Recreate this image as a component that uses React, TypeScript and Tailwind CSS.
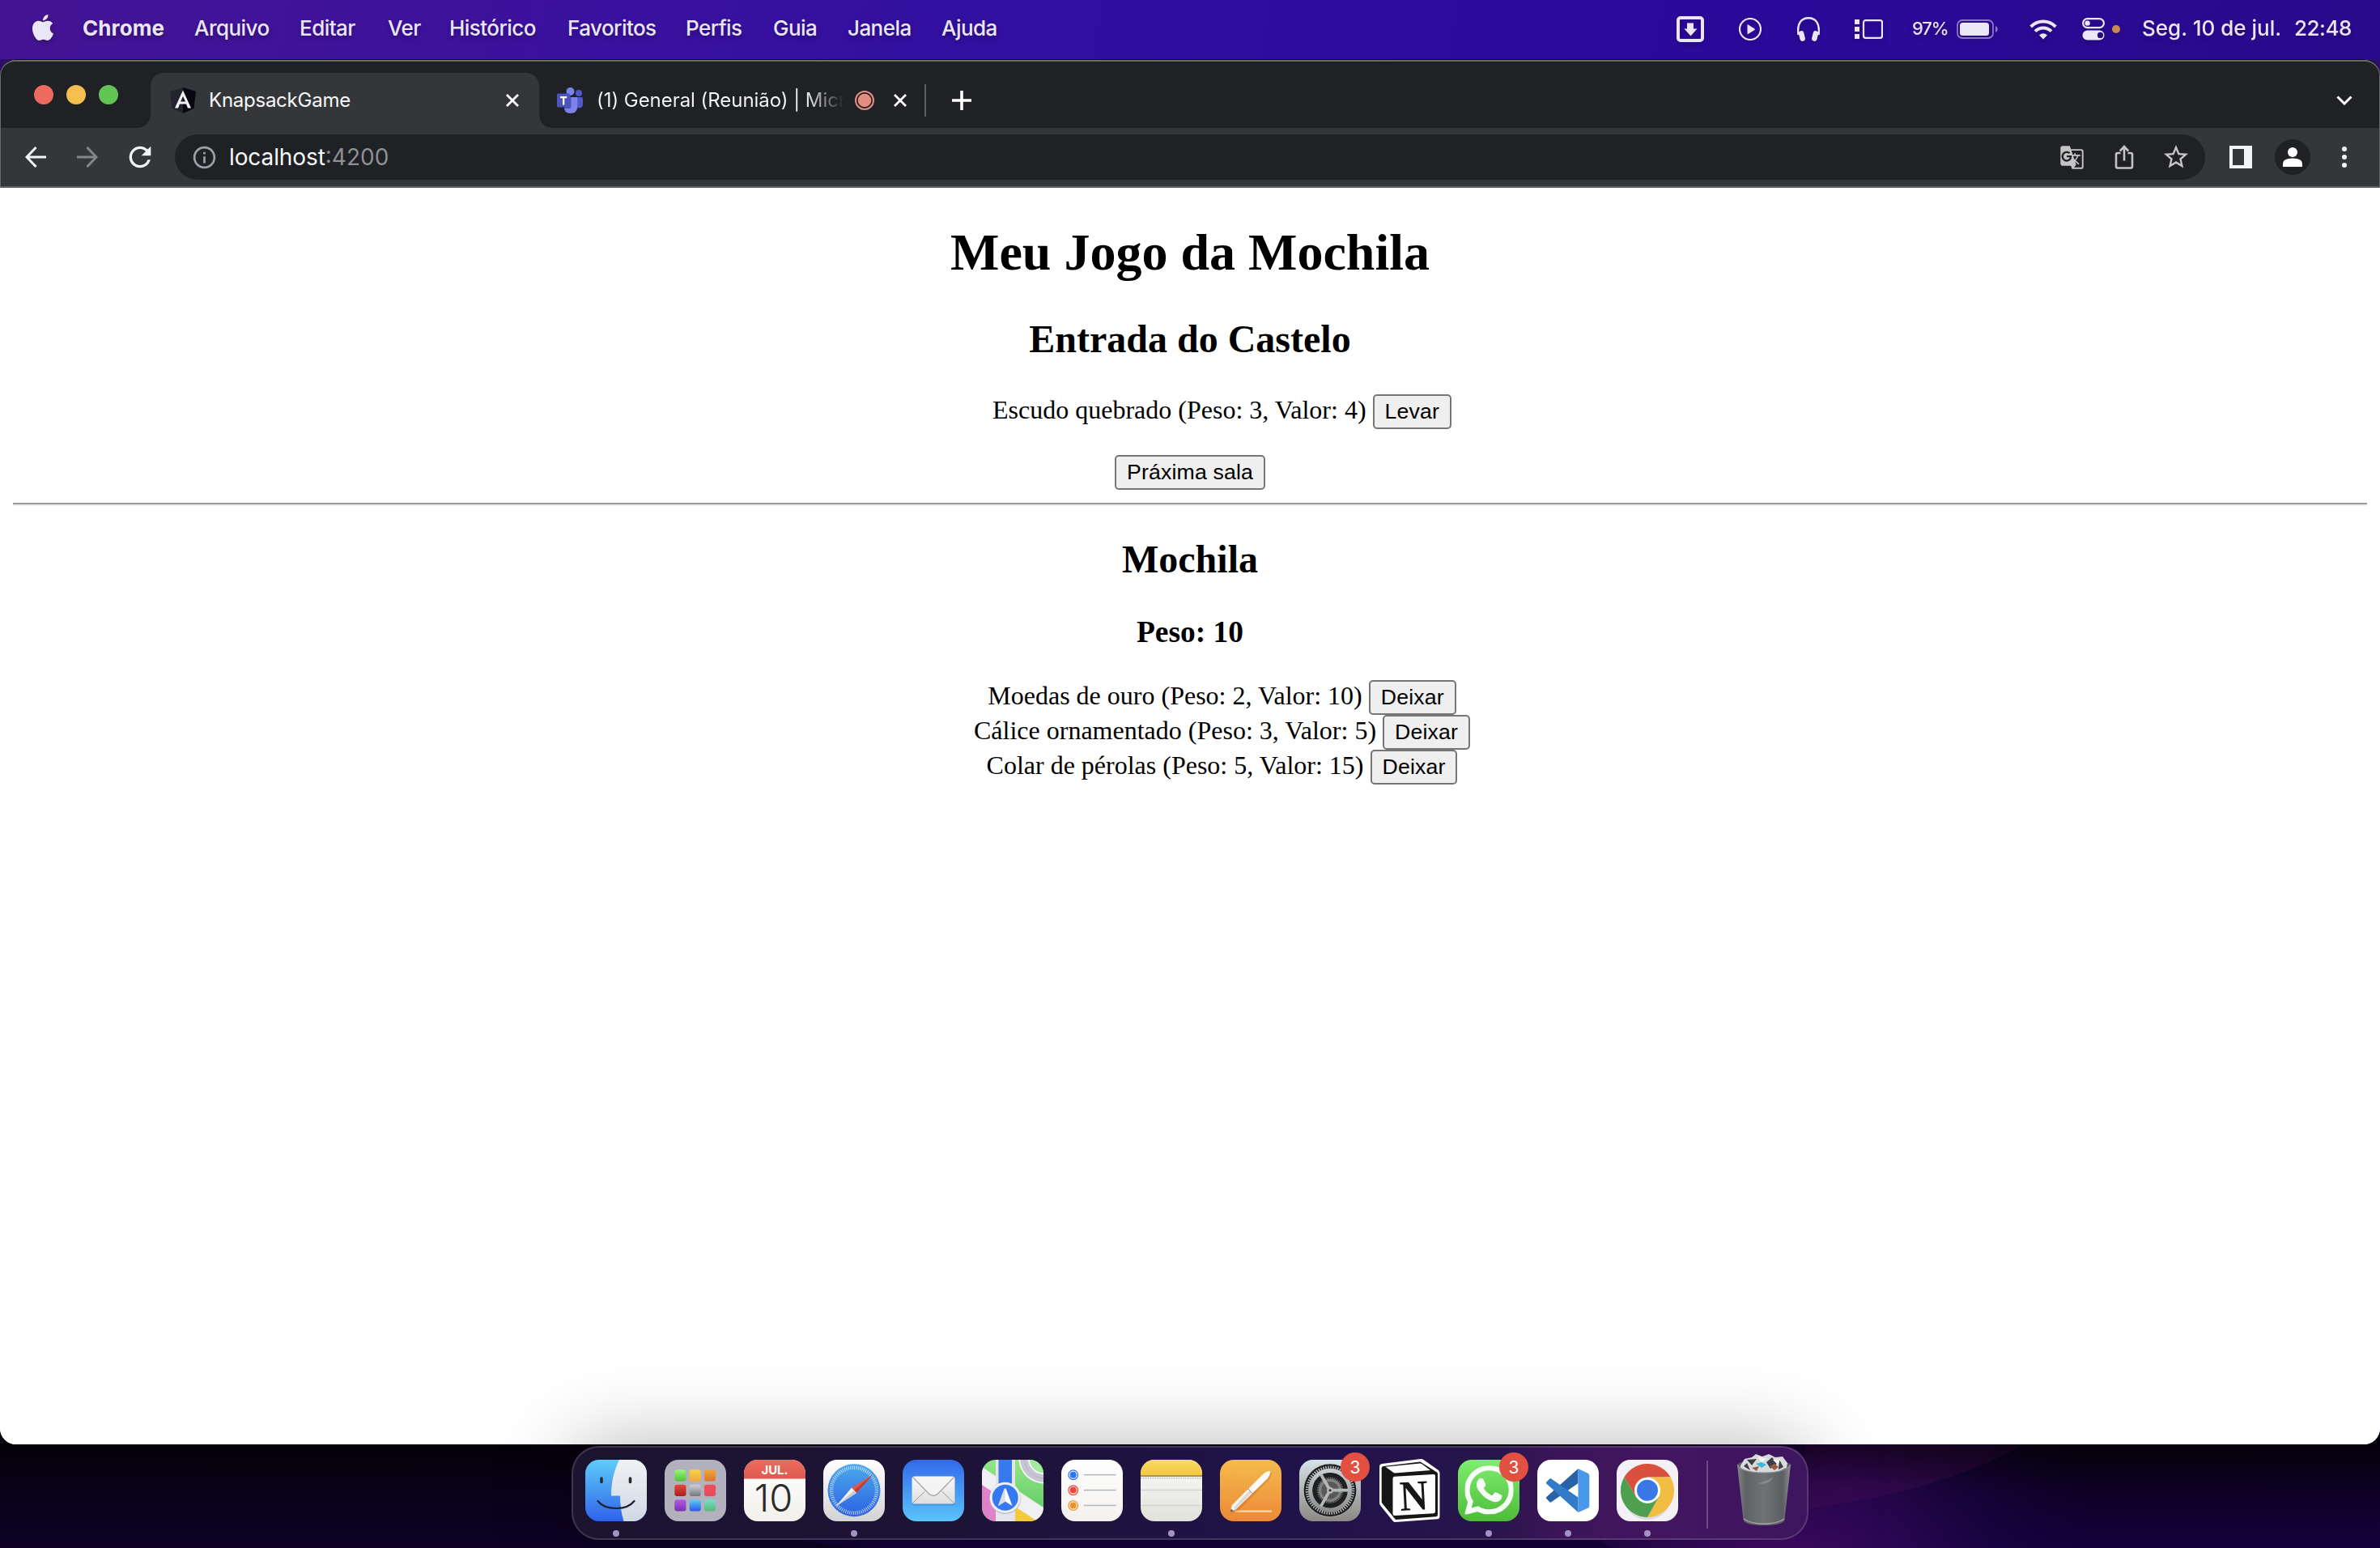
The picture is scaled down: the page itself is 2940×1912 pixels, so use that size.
import React from "react";
import type { ReactNode } from "react";
import { SiApple, SiWhatsapp } from "react-icons/si";
import { MdRefresh, MdInfoOutline, MdGTranslate, MdStarBorder } from "react-icons/md";

const menus = [
  { label: "Arquivo", width: "w-[130px]" },
  { label: "Editar", width: "w-[109px]" },
  { label: "Ver", width: "w-[76px]" },
  { label: "Histórico", width: "w-[146px]" },
  { label: "Favoritos", width: "w-[146px]" },
  { label: "Perfis", width: "w-[108px]" },
  { label: "Guia", width: "w-[92px]" },
  { label: "Janela", width: "w-[116px]" },
  { label: "Ajuda", width: "w-[80px]" },
];

const items = [
  { name: "Moedas de ouro", peso: 2, valor: 10 },
  { name: "Cálice ornamentado", peso: 3, valor: 5 },
  { name: "Colar de pérolas", peso: 5, valor: 15 },
];

function MenuBar() {
  return (
    <header className="flex h-[73px] shrink-0 items-start bg-[linear-gradient(100deg,#451494_0%,#3a119e_25%,#310f9f_42%,#2b0a9c_68%,#290a8c_100%)] text-[26px] font-medium text-[#ebe6f5]">
      <div className="flex h-[68px] w-[102px] items-center pl-[37px]">
        <SiApple className="size-[32px] drop-shadow-[0_2px_3px_rgba(0,0,0,0.3)]" />
      </div>
      <nav className="flex h-[68px] items-center whitespace-nowrap tracking-[-0.55px] [text-shadow:0_3px_5px_rgba(0,0,0,0.28)]">
        <span className="w-[138px] font-bold tracking-[0.1px]">Chrome</span>
        {menus.map((m) => (
          <span key={m.label} className={m.width}>
            {m.label}
          </span>
        ))}
      </nav>
      <div className="ml-auto flex h-[72px] items-center drop-shadow-[0_3px_3px_rgba(0,0,0,0.2)]">
        <svg className="mr-[43px] h-[32px] w-[34px]" viewBox="0 0 34 32" fill="none">
          <rect x="2" y="2" width="30" height="28" rx="3" stroke="currentColor" strokeWidth="4" />
          <path d="M13 8.500h8v7h4.500L17.500 24.500 9.500 15.500H13z" fill="currentColor" />
        </svg>
        <svg className="mr-[44px] size-[28px]" viewBox="0 0 28 28" fill="none">
          <circle cx="14" cy="14" r="13" stroke="currentColor" strokeWidth="2.200" />
          <path d="M10.500 9v10.500q0 1 1 .5l8-5q.8-.8 0-1.500l-8-5q-1-.5-1 .5z" fill="currentColor" />
        </svg>
        <svg className="mr-[43px] h-[30px] w-[28px]" viewBox="0 0 28 30" fill="none">
          <path d="M1.500 22C-.5 8 5 1.300 14 1.300S28.500 8 26.500 22" stroke="currentColor" strokeWidth="2.400" />
          <rect x="2.500" y="17" width="6.500" height="13" rx="3.200" transform="rotate(-14 5.700 23)" fill="currentColor" />
          <rect x="19" y="17" width="6.500" height="13" rx="3.200" transform="rotate(14 22.300 23)" fill="currentColor" />
        </svg>
        <svg className="mr-[36px] h-[24px] w-[35px]" viewBox="0 0 35 24" fill="none">
          <path d="M0 0h6v6H0zM0 9h6v6H0zM0 18h6v6H0z" fill="currentColor" />
          <rect x="11" y="1.200" width="23" height="21.600" rx="2.500" stroke="currentColor" strokeWidth="2.200" />
        </svg>
        <span className="mr-[9px] w-[46px] pb-px text-[22px] tracking-[-1.1px]">97%</span>
        <svg className="mr-[38px] h-[24px] w-[52px]" viewBox="0 0 52 24" fill="none">
          <rect x="1" y="1" width="44" height="22" rx="6" stroke="currentColor" strokeOpacity="0.5" strokeWidth="1.800" />
          <rect x="4" y="4" width="36" height="16" rx="3.500" fill="currentColor" />
          <path d="M48 8c3.600 1.500 3.600 6.500 0 8z" fill="currentColor" fillOpacity="0.5" />
        </svg>
        <svg className="mr-[31px] h-[26px] w-[34px]" viewBox="0 0 34 26" fill="none" stroke="currentColor" strokeWidth="4">
          <path d="M1.700 10a21.500 21.500 0 0 1 30.600 0" />
          <path d="M7 15.600a14 14 0 0 1 20 0" />
          <path d="M17 25.500l-5-5q5-4.400 10 0z" fill="currentColor" stroke="none" />
        </svg>
        <svg className="mr-[9px] h-[28px] w-[28px]" viewBox="0 0 28 28" fill="none">
          <rect x="1.100" y="1.100" width="25.800" height="11" rx="5.500" stroke="currentColor" strokeWidth="2.200" />
          <circle cx="6.600" cy="6.600" r="3.200" fill="currentColor" />
          <path fillRule="evenodd" d="M6.500 15.500h15a6 6 0 0 1 0 12h-15a6 6 0 0 1 0-12zm16 2.300a3.600 3.600 0 1 0 0 7.200 3.600 3.600 0 0 0 0-7.200z" fill="currentColor" />
        </svg>
        <span className="mr-[27px] size-[10px] rounded-full bg-[#cb894f]" />
        <span className="mr-[14px] w-[174px] whitespace-nowrap pb-[3px]">Seg. 10 de jul.</span>
        <span className="mr-[32px] w-[74px] pb-[3px] tracking-[-0.5px]">22:48</span>
      </div>
    </header>
  );
}

function Cross({ className }: { className: string }) {
  return (
    <svg className={className} viewBox="0 0 16 16" fill="none" stroke="white" strokeWidth="2.800">
      <path d="M1 1l14 14M15 1L1 15" />
    </svg>
  );
}

function TabStrip() {
  return (
    <div className="flex h-[84px] items-end bg-[#202124] text-[24px] text-[#f7f8f9]">
      <div className="flex h-full w-[186px] items-center gap-[16px] pl-[42px] pt-[2px]">
        <span className="size-[24px] rounded-full bg-[#ed6a5f]" />
        <span className="size-[24px] rounded-full bg-[#f5bf4f]" />
        <span className="size-[24px] rounded-full bg-[#61c554]" />
      </div>
      <div className="relative flex h-[68px] w-[480px] items-center rounded-t-[16px] bg-[#35363a] pl-[24px]">
        <span className="absolute -left-[16px] bottom-0 size-[16px] bg-[radial-gradient(circle_at_0_0,#202124_15.500px,#35363a_16px)]" />
        <span className="absolute -right-[16px] bottom-0 size-[16px] bg-[radial-gradient(circle_at_100%_0,#202124_15.500px,#35363a_16px)]" />
        <svg className="h-[32px] w-[32px]" viewBox="0 0 32 32">
          <path d="M16 0L0 5l2.500 21L16 32z" fill="#23242f" />
          <path d="M16 0l16 5-2.500 21L16 32z" fill="#06070f" />
          <path fillRule="evenodd" d="M16 3.500L6 25.500h4l2-5h8l2 5h4zM16 11l3 6.500h-6z" fill="#f2f2f2" />
        </svg>
        <span className="ml-[16px] tracking-[-0.25px]">KnapsackGame</span>
        <Cross className="ml-auto mr-[25px] size-[16px]" />
      </div>
      <div className="flex h-[68px] w-[478px] items-center pl-[22px]">
        <svg className="h-[32px] w-[32px] shrink-0" viewBox="0 0 32 32">
          <circle cx="27" cy="7" r="4" fill="#5059c9" />
          <path d="M20 12h10.500q1.500 0 1.500 1.500v7q0 5-5 5t-7-4z" fill="#5059c9" />
          <circle cx="16.500" cy="5" r="5" fill="#7b83eb" />
          <path d="M10 12h14.500q.8 0 .8 1v10q0 9-8.500 9t-8-9z" fill="#7b83eb" />
          <path d="M9 10h7q1.500 0 1.500 1.500V24q0 2-2 2H9z" fill="#3c4399" opacity="0.7" />
          <rect y="7.500" width="16" height="17" rx="1.500" fill="#4b53bc" />
          <path d="M4 11h8.300v2.200H9.300v8.300H7v-8.300H4z" fill="white" />
        </svg>
        <span className="ml-[17px] w-[306px] shrink-0 whitespace-nowrap bg-[linear-gradient(to_right,#f7f8f9_84%,#202124_100%)] bg-clip-text tracking-[-0.05px] text-transparent">
          (1) General (Reunião) | Micr
        </span>
        <svg className="ml-[13px] size-[24px] shrink-0" viewBox="0 0 24 24" fill="none">
          <circle cx="12" cy="12" r="11" stroke="#e48d83" strokeWidth="2" />
          <circle cx="12" cy="12" r="8.300" fill="#e48d83" />
        </svg>
        <Cross className="ml-[24px] size-[16px] shrink-0" />
        <span className="ml-auto h-[40px] w-[2px] bg-[#5d5e62]" />
      </div>
      <div className="flex h-[68px] flex-1 items-center justify-between pl-[32px] pr-[34px]">
        <svg className="size-[24px]" viewBox="0 0 24 24" stroke="white" strokeWidth="3.600">
          <path d="M12 0v24M0 12h24" />
        </svg>
        <svg className="h-[12px] w-[20px]" viewBox="0 0 20 12" fill="none" stroke="white" strokeWidth="3">
          <path d="M1.500 1.500L10 10l8.500-8.500" />
        </svg>
      </div>
    </div>
  );
}

function Toolbar() {
  return (
    <div className="flex h-[74px] items-center border-b-2 border-[#5f6063] bg-[#35363a]">
      <svg className="ml-[31px] h-[26px] w-[26px]" viewBox="0 0 26 26" fill="none" stroke="#f1f3f4" strokeWidth="3">
        <path d="M26 13H2.500M13.500 1L2 13l11.500 12" />
      </svg>
      <svg className="ml-[38px] h-[26px] w-[26px]" viewBox="0 0 26 26" fill="none" stroke="#85868a" strokeWidth="3">
        <path d="M0 13h23.500M12.500 1L24 13 12.500 25" />
      </svg>
      <MdRefresh className="ml-[32px] size-[40px] text-[#f1f3f4]" />
      <div className="ml-[23px] flex h-[56px] w-[2508px] items-center rounded-full bg-[#202124] text-[28px]">
        <MdInfoOutline className="ml-[20px] size-[33px] text-[#9aa0a6]" />
        <span className="ml-[14px] tracking-[-0.1px] text-[#f8f9fa]">localhost</span>
        <span className="text-[#8e9094]">:4200</span>
        <MdGTranslate className="ml-auto size-[31px] text-[#c4c4c5]" />
        <svg className="ml-[37px] h-[30px] w-[24px]" viewBox="0 0 24 30" fill="none" stroke="#c4c4c5" strokeWidth="2.600">
          <path d="M7.500 10H4q-2 0-2 2v14.500q0 2 2 2h16q2 0 2-2V12q0-2-2-2h-3.500M12 19.500V3M6.800 7.500L12 2l5.200 5.500" />
        </svg>
        <MdStarBorder className="ml-[34px] mr-[18px] size-[36px] text-[#c4c4c5]" />
      </div>
      <svg className="ml-[30px] size-[28px]" viewBox="0 0 28 28">
        <path fillRule="evenodd" d="M0 0h28v28H0zM4 4v20h14V4z" fill="#f1f3f4" />
      </svg>
      <div className="ml-[28px] flex size-[44px] items-center justify-center rounded-full bg-[#202124]">
        <svg className="h-[24px] w-[24px]" viewBox="0 0 24 24" fill="white">
          <circle cx="12" cy="6" r="6" />
          <path d="M0 24v-4q0-6.500 12-6.500T24 20v4z" />
        </svg>
      </div>
      <div className="ml-[39px] flex flex-col gap-[4px]">
        <span className="size-[6px] rounded-full bg-[#f1f3f4]" />
        <span className="size-[6px] rounded-full bg-[#f1f3f4]" />
        <span className="size-[6px] rounded-full bg-[#f1f3f4]" />
      </div>
    </div>
  );
}

function GameButton({ children }: { children: ReactNode }) {
  return (
    <button className="h-[43px] rounded-[5px] border-2 border-[#767676] bg-[#efefef] px-[13px] font-['Liberation_Sans',sans-serif] text-[26.67px] leading-[39px] tracking-[0.15px] text-black">
      {children}
    </button>
  );
}

function ItemRow({ name, peso, valor, action }: { name: string; peso: number; valor: number; action: string }) {
  return (
    <li className="flex h-[43px] items-baseline justify-center gap-[8px] text-[32px] leading-[37px]">
      <span>
        {name} (Peso: {peso}, Valor: {valor})
      </span>
      <GameButton>{action}</GameButton>
    </li>
  );
}

function Page() {
  return (
    <main className="flex-1 bg-white px-[16px] pt-[43px] text-center font-['Liberation_Serif',serif] text-black">
      <h1 className="text-[64px] font-bold leading-[74px]">Meu Jogo da Mochila</h1>
      <h2 className="mt-[43px] text-[48px] font-bold leading-[54px]">Entrada do Castelo</h2>
      <ul className="mt-[41px] pl-[79px]">
        <ItemRow name="Escudo quebrado" peso={3} valor={4} action="Levar" />
      </ul>
      <div className="mt-[32px] flex justify-center">
        <GameButton>Práxima sala</GameButton>
      </div>
      <hr className="mt-[16px] h-[4px] border-b-2 border-t-2 border-b-[#eeeeee] border-t-[#9a9a9a]" />
      <h2 className="mt-[39px] text-[48px] font-bold leading-[54px]">Mochila</h2>
      <h3 className="mt-[41px] text-[37.44px] font-bold leading-[43px]">Peso: 10</h3>
      <ul className="mt-[38px] pl-[79px]">
        {items.map((i) => (
          <ItemRow key={i.name} name={i.name} peso={i.peso} valor={i.valor} action="Deixar" />
        ))}
      </ul>
    </main>
  );
}

function Tile({ children }: { children: ReactNode }) {
  return (
    <svg className="size-[76px] overflow-visible" viewBox="0 0 76 76">
      <defs>
        <clipPath id="tile">
          <rect width="76" height="76" rx="17" />
        </clipPath>
      </defs>
      <g clipPath="url(#tile)">{children}</g>
    </svg>
  );
}

function Grad({ id, from, to }: { id: string; from: string; to: string }) {
  return (
    <linearGradient id={id} x1="0" y1="0" x2="0" y2="1">
      <stop offset="0" stopColor={from} />
      <stop offset="1" stopColor={to} />
    </linearGradient>
  );
}

function Finder() {
  return (
    <Tile>
      <Grad id="fnd1" from="#5fcdf9" to="#2f62ea" />
      <Grad id="fnd2" from="#f1f1f3" to="#cfd8e6" />
      <rect width="76" height="76" fill="url(#fnd1)" />
      <path d="M42 0C34 16 32 32 32 44.500h11C43 56 44.500 66 47.500 76H76V0z" fill="url(#fnd2)" />
      <path d="M20 23v4.500M55.500 23v4.500" stroke="#222a33" strokeWidth="3.600" strokeLinecap="round" />
      <path d="M15.500 51C25 63 51 63 60.500 51" stroke="#1c222b" strokeWidth="2.200" strokeLinecap="round" fill="none" />
    </Tile>
  );
}

const pads: [string, string][] = [
  ["#9bf37c", "#4fc63a"], ["#f8d24c", "#f0a838"], ["#f0a53a", "#dd7430"],
  ["#e5493a", "#a81f1a"], ["#ccd3da", "#77777a"], ["#ee4f5c", "#e84a62"],
  ["#b45be0", "#7a2fb5"], ["#5fcdf9", "#2b55e6"], ["#7fdccb", "#57b877"],
];

function Launchpad() {
  return (
    <Tile>
      <rect width="76" height="76" fill="#b4b1be" />
      {pads.map(([a, b], i) => (
        <g key={a}>
          <Grad id={"pad" + i} from={a} to={b} />
          <rect x={12.3 + (i % 3) * 18.3} y={12.3 + Math.floor(i / 3) * 18.5} width="14.200" height="14.200" rx="3" fill={`url(#pad${i})`} />
        </g>
      ))}
    </Tile>
  );
}

function Calendar() {
  return (
    <Tile>
      <Grad id="cal1" from="#ec6a5e" to="#dc5b4f" />
      <Grad id="cal2" from="#ffffff" to="#f1f0ec" />
      <rect width="76" height="76" fill="url(#cal2)" />
      <rect width="76" height="23.500" fill="url(#cal1)" />
      <text x="38" y="18" textAnchor="middle" fontSize="15" fontWeight="700" fill="white" fontFamily="Inter">JUL.</text>
      <text x="36.500" y="64" textAnchor="middle" fontSize="47" fontWeight="300" fill="#2b2b2b" fontFamily="Inter">10</text>
    </Tile>
  );
}

function Safari() {
  return (
    <Tile>
      <Grad id="saf1" from="#ffffff" to="#d3d3d3" />
      <Grad id="saf2" from="#4ba9ec" to="#2c62e2" />
      <rect width="76" height="76" fill="url(#saf1)" />
      <circle cx="38" cy="37.700" r="32.500" fill="url(#saf2)" />
      <circle cx="38" cy="37.700" r="28" fill="none" stroke="white" strokeOpacity="0.75" strokeWidth="4.500" strokeDasharray="0.900 1.543" />
      <path d="M61 18.500L35 34.500l6 6.400z" fill="#e2564a" />
      <path d="M61 18.500L38 37.700l3 3.200z" fill="#c43c33" />
      <path d="M15.500 57.500L35 34.500l6 6.400z" fill="#f6f6f6" />
      <path d="M15.500 57.500L38 37.700l3 3.200z" fill="#c9ccd2" />
    </Tile>
  );
}

function Mail() {
  return (
    <Tile>
      <Grad id="mail1" from="#3269e8" to="#5ac4fb" />
      <Grad id="mail2" from="#fafafa" to="#dedede" />
      <rect width="76" height="76" fill="url(#mail1)" />
      <rect x="11.500" y="22.500" width="53" height="34" rx="3" fill="#1d5fb0" opacity="0.3" />
      <rect x="11.500" y="20.500" width="53" height="34" rx="3" fill="url(#mail2)" />
      <path d="M12.500 53.500L27.500 39M63.500 53.500L48.500 39" stroke="#9a9a9a" strokeWidth="1" />
      <path d="M12.500 21.500l19.500 20q6 6 12 0l19.500-20" fill="#f4f4f4" stroke="#a5a5a5" strokeWidth="1.200" />
    </Tile>
  );
}

function Maps() {
  return (
    <Tile>
      <Grad id="map1" from="#93e58a" to="#5cc85f" />
      <rect width="76" height="76" fill="url(#map1)" />
      <path d="M0 30l41 28v18H0z" fill="#e080c8" />
      <path d="M41 55l30 21H41z" fill="#f5c93d" />
      <path d="M0 9l76 50v22L0 31z" fill="#f0f0f3" />
      <path d="M17 0h24v76H17z" fill="#e4e4ea" />
      <path d="M20.500 0H37v40H20.500z" fill="#3879f0" />
      <circle cx="77" cy="-2" r="25" fill="#a4ea9c" stroke="white" strokeWidth="13" />
      <circle cx="77" cy="-2" r="25" fill="none" stroke="#c5c6d2" strokeWidth="10" />
      <circle cx="77" cy="-2" r="25" fill="none" stroke="#b4b5c2" strokeWidth="1" />
      <circle cx="28.700" cy="47.500" r="19.500" fill="#b8bac4" />
      <circle cx="28.700" cy="46.700" r="19" fill="#eef0f4" />
      <circle cx="28.700" cy="46.700" r="16" fill="#3478f2" />
      <path d="M28.700 35.500q1 0 1.400 1.200L37.500 57l-8.800-5.500L20 57l7.300-20.300q.4-1.200 1.400-1.200z" fill="white" />
      <path d="M28.700 35.500V51.500L20 57l7.300-20.300q.4-1.200 1.400-1.200z" fill="#dcdde2" />
    </Tile>
  );
}

function Reminders() {
  return (
    <Tile>
      <Grad id="rem1" from="#ffffff" to="#f3f1ee" />
      <rect width="76" height="76" fill="url(#rem1)" />
      {["#2f74ee", "#e84b3b", "#ea9330"].map((c, i) => (
        <g key={c}>
          <circle cx="14.700" cy={18.7 + i * 18.9} r="5.800" fill="none" stroke={c} strokeWidth="1.300" />
          <circle cx="14.700" cy={18.7 + i * 18.9} r="4" fill={c} />
          <rect x="28" y={17.9 + i * 18.9} width="39.500" height="1.500" fill="#b5b5bb" />
        </g>
      ))}
    </Tile>
  );
}

function Notes() {
  return (
    <Tile>
      <Grad id="not1" from="#fafaf8" to="#e2e2dc" />
      <Grad id="not2" from="#f9db6b" to="#f4c63c" />
      <rect width="76" height="76" fill="url(#not1)" />
      <rect width="76" height="19.500" fill="url(#not2)" />
      <rect y="19" width="76" height="2" fill="#a9935a" />
      <path d="M0 22.700h76" stroke="#b9b9b6" strokeWidth="1.400" strokeDasharray="1.400 1.500" />
      <path d="M0 37.500h76M0 56.500h76" stroke="#d4d4d0" strokeWidth="1.300" />
    </Tile>
  );
}

function Pages() {
  return (
    <Tile>
      <Grad id="pag1" from="#f5bb4d" to="#ec8937" />
      <rect width="76" height="76" fill="url(#pag1)" />
      <path d="M18 63.700h46" stroke="#fde3bf" strokeWidth="2.200" strokeOpacity="0.85" />
      <path d="M12.500 64.500L16 57 54 18q5-4.500 8-4 .8 4-3.500 9L20 62z" fill="#b9651f" opacity="0.35" transform="translate(1.500 2)" />
      <path d="M12.500 64.500L15 56 53 18q5.500-4.800 9-4 .8 4-3.500 9.500L20 61z" fill="#fbfaf8" />
      <path d="M16.500 59.500L36 38l3 2.500L20 61z" fill="#dedad4" />
      <path d="M35 36l5.500 6" stroke="#8d8a86" strokeWidth="1" />
      <path d="M12.500 64.500l1.300-4 3 2.700z" fill="#6d5a48" />
    </Tile>
  );
}

function Settings() {
  return (
    <Tile>
      <Grad id="set1" from="#d6e2ea" to="#8b8883" />
      <Grad id="set2" from="#c6ccd0" to="#8e8e8e" />
      <rect width="76" height="76" fill="url(#set1)" />
      <circle cx="38" cy="37.700" r="32.500" fill="#1d1e1f" />
      <circle cx="38" cy="37.700" r="32.800" fill="none" stroke="#c9c9c9" strokeOpacity="0.5" strokeWidth="0.800" />
      <circle cx="38" cy="37.700" r="28.200" fill="none" stroke="#b4b8ba" strokeWidth="4" strokeDasharray="1.500 1.453" />
      <circle cx="38" cy="37.700" r="24.300" fill="none" stroke="url(#set2)" strokeWidth="5.200" />
      <circle cx="38" cy="37.700" r="21.500" fill="#1f2021" />
      <circle cx="38" cy="37.700" r="12.500" fill="#585858" stroke="#808080" strokeWidth="3.500" />
      <circle cx="38" cy="37.700" r="15.200" fill="none" stroke="#7b7b7b" strokeWidth="2" strokeDasharray="1.200 1.100" />
      <path d="M38 37.700h23M38 37.700L26.500 17.800M38 37.700L26.500 57.600" stroke="#b3b6b8" strokeWidth="3.800" />
      <circle cx="38" cy="37.700" r="4" fill="#b3b6b8" />
      <circle cx="38" cy="37.700" r="1.500" fill="#2a2a2a" />
    </Tile>
  );
}

function Notion() {
  return (
    <svg className="size-[76px] overflow-visible" viewBox="0 0 76 76">
      <path d="M4 5L52 -1q2 0 3.500 1L74 13q1.500 1.500 1.500 3.500V70q0 3-3 3.200L21 77q-2 .2-3.500-1.500L2.500 57Q1 55 1 53V8.500Q1 5.500 4 5z" fill="white" />
      <path d="M6 8L51.500 2.500 72 15.500q1 1 1 2V68q0 2-2 2.200L21 74 4.500 54q-.8-1.500-.8-2.500V10.500q0-2.200 2.300-2.500z" fill="#161616" />
      <path d="M8.500 8.800L51 4.500q1.500 0 2.500.8L64 13 20 16.600q-1 0-1.800-.8z" fill="white" />
      <path d="M17.500 23q0-2 2-2.200L68 18q2 0 2 2v44q0 2-2 2.200L20 69q-2.500 0-2.500-2z" fill="white" />
      <text x="43.500" y="62" textAnchor="middle" fontSize="53" fontWeight="700" fontFamily="Liberation Serif" fill="#161616" transform="rotate(-3 43.500 44)" textLength="35" lengthAdjust="spacingAndGlyphs">N</text>
    </svg>
  );
}

function WhatsApp() {
  return (
    <Tile>
      <Grad id="wa1" from="#80ec70" to="#4dbd38" />
      <rect width="76" height="76" fill="url(#wa1)" />
      <g transform="translate(8.500 7.500)">
        <SiWhatsapp size={60} color="#f7fdf6" stroke="#f7fdf6" strokeWidth="0.500" />
      </g>
    </Tile>
  );
}

function VSCode() {
  return (
    <Tile>
      <rect width="76" height="76" fill="white" />
      <path d="M50.500 11L11.300 46q-1 1 0 2l4 4.200q1 .8 2 0L50.500 29z" fill="#2863a8" />
      <path d="M50.500 65L11.300 29.500q-1-1 0-2l4-4q1-.8 2 0L50.500 46.500z" fill="#337ac9" />
      <path d="M50.500 11L63 17q1.300.8 1.300 2v38.500q0 1.200-1.300 2L50.500 65z" fill="#4a98ea" />
    </Tile>
  );
}

function Chrome() {
  return (
    <Tile>
      <rect width="76" height="76" fill="#f3f1f6" />
      <ellipse cx="38" cy="43" rx="30" ry="31" fill="#b9a9a9" opacity="0.35" />
      <path d="M9.400 21.500A33 33 0 0 1 66.600 21.500H38L24 46z" fill="#d9503f" />
      <path d="M66.600 21.500A33 33 0 0 1 38 71L52 46 38 21.500z" fill="#f1bd42" />
      <path d="M38 71A33 33 0 0 1 9.400 21.500L24 46l28 0z" fill="#4f9f50" />
      <circle cx="38" cy="37.700" r="16" fill="white" />
      <circle cx="38" cy="37.700" r="13" fill="#3b78e7" />
    </Tile>
  );
}

function Trash() {
  return (
    <svg className="-mt-[6px] h-[90px] w-[66px] overflow-visible" viewBox="0 0 66 90">
      <linearGradient id="tr1" x1="0" y1="0" x2="1" y2="0">
        <stop offset="0" stopColor="#85878a" />
        <stop offset="0.150" stopColor="#606366" />
        <stop offset="0.500" stopColor="#707376" />
        <stop offset="0.850" stopColor="#5c5f62" />
        <stop offset="1" stopColor="#8e9093" />
      </linearGradient>
      <ellipse cx="33" cy="12.500" rx="33" ry="6.500" fill="#55585b" />
      <path d="M4 13L9 5l9-2 5-4 8 3 8-3 8 4 9-1 6 8-1 6-14 6H17L4 19z" fill="#d9dadb" />
      <path d="M12 6l6 7 6-8zM36 9l7-6 6 8-8 6zM8 14l8 5-4-9zM52 6l5 9-6 3z" fill="#3c4046" />
      <path d="M23 11l7-2 6 3-6 4z" fill="#3fb9d8" />
      <path d="M18 16l6 4 3-6zM40 14l6 5 5-4-5-4z" fill="#9a5a3c" />
      <path d="M25 2l5 7 6-4zM44 6l6 6 3-6z" fill="#f5f5f5" />
      <path d="M0 12Q6 22 33 22T66 12L58.500 80Q57 87 33 87T7.500 80z" fill="url(#tr1)" />
      <path d="M0 12Q6 22 33 22T66 12" fill="none" stroke="#8f9295" strokeWidth="1.200" />
      <path d="M25 35q12-2 20-8-6 11-20 8z" fill="#9b9ea1" opacity="0.6" />
      <path d="M8 79q8 6 25 6t25-6" fill="none" stroke="#a2a4a7" strokeWidth="1.500" />
    </svg>
  );
}

const apps: { id: string; icon: ReactNode; running?: boolean; badge?: string }[] = [
  { id: "finder", icon: <Finder />, running: true },
  { id: "launchpad", icon: <Launchpad /> },
  { id: "calendar", icon: <Calendar /> },
  { id: "safari", icon: <Safari />, running: true },
  { id: "mail", icon: <Mail /> },
  { id: "maps", icon: <Maps /> },
  { id: "reminders", icon: <Reminders /> },
  { id: "notes", icon: <Notes />, running: true },
  { id: "pages", icon: <Pages /> },
  { id: "settings", icon: <Settings />, badge: "3" },
  { id: "notion", icon: <Notion /> },
  { id: "whatsapp", icon: <WhatsApp />, running: true, badge: "3" },
  { id: "vscode", icon: <VSCode />, running: true },
  { id: "chrome", icon: <Chrome />, running: true },
];

function Dock() {
  return (
    <div className="mt-[2px] flex h-[116px] w-[1528px] items-start rounded-[34px] border-2 border-[#ffffff26] bg-[linear-gradient(90deg,#1b1430_0%,#1d1336_30%,#20134a_60%,#27154a_74%,#3c1559_80%,#42155f_88%,#3d155f_100%)] bg-origin-border pl-[15px] pt-[15px] shadow-[0_0_100px_rgba(0,0,0,0.3)]">
      <div className="flex gap-[22px]">
        {apps.map((a) => (
          <div key={a.id} className="relative flex flex-col items-center">
            {a.icon}
            {a.running && <span className="mt-[11px] size-[8px] rounded-full bg-[#a592c4]" />}
            {a.badge && (
              <span className="absolute -right-[11px] -top-[9px] flex size-[36px] items-center justify-center rounded-full bg-[#e25041] text-[21px] leading-none text-white">
                {a.badge}
              </span>
            )}
          </div>
        ))}
      </div>
      <span className="ml-[35px] mr-[36px] mt-px h-[84px] w-[2px] bg-[#ffffff38]" />
      <Trash />
    </div>
  );
}

function Wallpaper() {
  return (
    <svg className="absolute bottom-0 left-0 h-[160px] w-full" viewBox="0 0 2940 160" preserveAspectRatio="none">
      <defs>
        <Grad id="wp1" from="#040108" to="#0d0226" />
        <Grad id="wp2" from="#080112" to="#12023c" />
        <radialGradient id="wp3" gradientUnits="userSpaceOnUse" cx="2180" cy="190" r="420" gradientTransform="translate(0 40) scale(1 0.790)">
          <stop offset="0" stopColor="#4a0b70" />
          <stop offset="0.450" stopColor="#2c0754" stopOpacity="0.750" />
          <stop offset="1" stopColor="#12023c" stopOpacity="0" />
        </radialGradient>
        <Grad id="wp4" from="#000000" to="#00000000" />
      </defs>
      <rect width="2940" height="160" fill="url(#wp1)" />
      <path d="M660 32Q900 160 1100 160H2940V32z" fill="url(#wp2)" />
      <path d="M1900 0Q1935 130 1991 160H2940V0z" fill="url(#wp3)" />
      <path d="M2230 32H2500Q2400 90 2230 112z" fill="#5a1260" opacity="0.220" />
      <path d="M0 28h2940v60H0z" fill="url(#wp4)" opacity="0.450" />
    </svg>
  );
}

export default function App() {
  return (
    <div className="relative h-[1912px] w-[2940px] overflow-hidden bg-[#2c0e66] font-['Inter',sans-serif]">
      <Wallpaper />
      <div className="relative flex h-full flex-col">
        <MenuBar />
        <div className="flex h-[1711px] shrink-0 flex-col overflow-hidden rounded-[20px] border-t border-black bg-white">
          <div className="relative h-[158px] shrink-0">
            <TabStrip />
            <Toolbar />
            <div className="pointer-events-none absolute inset-0 rounded-t-[19px] border-x border-t-2 border-[#67696b]" />
          </div>
          <Page />
        </div>
        <div className="flex justify-center">
          <Dock />
        </div>
      </div>
    </div>
  );
}
